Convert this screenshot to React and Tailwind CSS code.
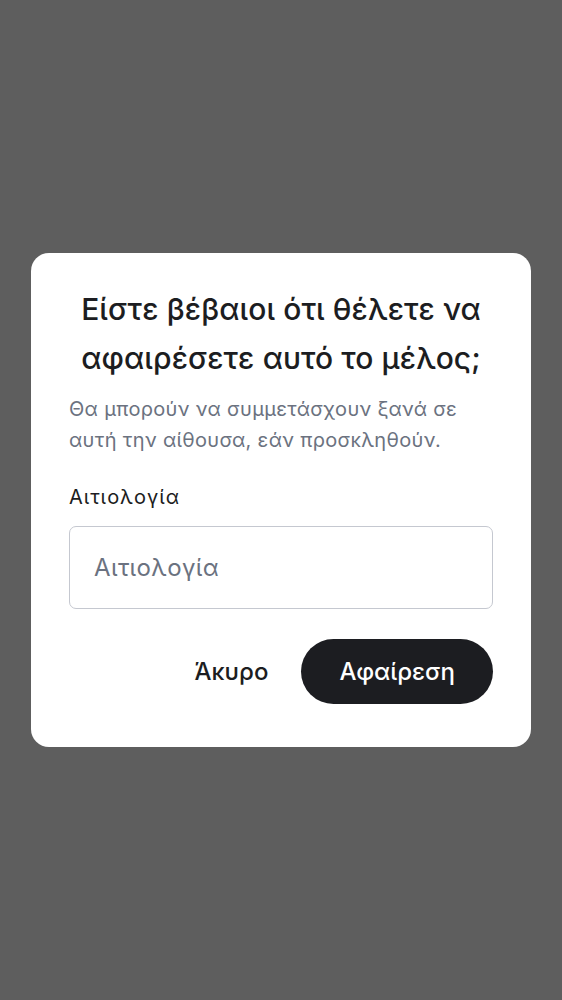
import React, { useState } from "react";

const RemoveMemberDialog = () => {
  const [reason, setReason] = useState("");

  return (
    <div
      className="min-h-screen w-full flex items-center justify-center bg-[#5e5e5e] px-[31px]"
      style={{ fontFamily: "Inter, 'Noto Sans', sans-serif" }}
    >
      <div className="w-full bg-white rounded-[18px] px-[38px] pt-[32px] pb-[43px]">
        {/* Title */}
        <h2 className="text-center text-[30px] leading-[49px] font-medium tracking-[0.1px] text-[#1c1d21]">
          Είστε βέβαιοι ότι θέλετε να αφαιρέσετε αυτό το μέλος;
        </h2>

        <p className="mt-[11px] text-[20px] leading-[31px] tracking-[0.32px] text-[#6b7280]">
          Θα μπορούν να συμμετάσχουν ξανά σε αυτή την αίθουσα, εάν προσκληθούν.
        </p>

        {/* Reason */}
        <label className="block mt-[27px] text-[20px] leading-[28px] tracking-[1px] text-[#1c1d21]">
          Αιτιολογία
        </label>
        <input
          type="text"
          value={reason}
          onChange={(e) => setReason(e.target.value)}
          placeholder="Αιτιολογία"
          className="mt-[15px] w-full h-[83px] px-[24px] rounded-[7px] border-[1.5px] border-[#c5c8d0] text-[24px] tracking-[0.4px] text-[#1c1d21] placeholder:text-[#6b7280] outline-none"
        />

        {/* Actions */}
        <div className="mt-[30px] flex items-center justify-end gap-[17px]">
          <button type="button" className="px-[16px] h-[65px] text-[24px] font-medium text-[#1c1d21]">
            Άκυρο
          </button>
          <button
            type="button"
            className="h-[65px] px-[38px] rounded-full bg-[#1c1d21] text-white text-[24px] font-medium"
          >
            Αφαίρεση
          </button>
        </div>
      </div>
    </div>
  );
};

export default function App() {
  return <RemoveMemberDialog />;
}
